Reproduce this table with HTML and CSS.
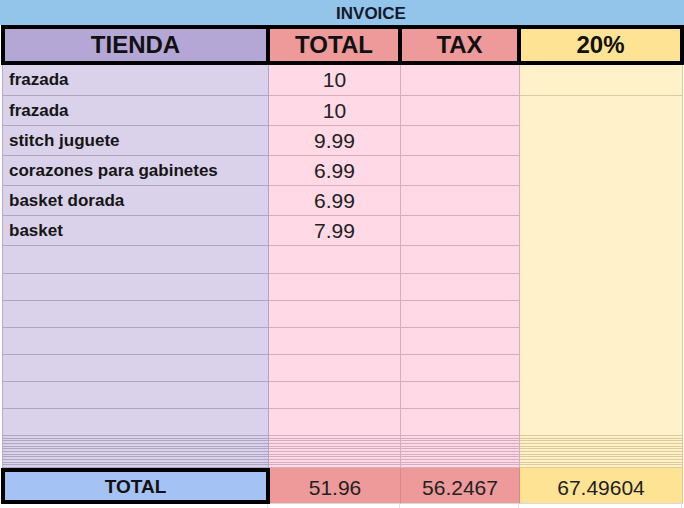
FILE: index.html
```html
<!DOCTYPE html>
<html lang="es">
<head>
<meta charset="utf-8">
<title>Invoice</title>
<link rel="stylesheet" href="styles.css">
</head>
<body>
<div class="sheet">
  <div class="banner">INVOICE</div>
  <div class="head">
    <div class="h h-store">TIENDA</div>
    <div class="h h-red">TOTAL</div>
    <div class="h h-red">TAX</div>
    <div class="h h-yellow">20%</div>
  </div>
  <div class="grid">
    <div class="pct pct-merged"></div>

    <div class="c store">frazada</div><div class="c amt">10</div><div class="c tax"></div><div class="c pct"></div>
    <div class="c store">frazada</div><div class="c amt">10</div><div class="c tax"></div>
    <div class="c store">stitch juguete</div><div class="c amt">9.99</div><div class="c tax"></div>
    <div class="c store">corazones para gabinetes</div><div class="c amt">6.99</div><div class="c tax"></div>
    <div class="c store">basket dorada</div><div class="c amt">6.99</div><div class="c tax"></div>
    <div class="c store">basket</div><div class="c amt">7.99</div><div class="c tax"></div>
    <div class="c store"></div><div class="c amt"></div><div class="c tax"></div>
    <div class="c store"></div><div class="c amt"></div><div class="c tax"></div>
    <div class="c store"></div><div class="c amt"></div><div class="c tax"></div>
    <div class="c store"></div><div class="c amt"></div><div class="c tax"></div>
    <div class="c store"></div><div class="c amt"></div><div class="c tax"></div>
    <div class="c store"></div><div class="c amt"></div><div class="c tax"></div>
    <div class="c store"></div><div class="c amt"></div><div class="c tax"></div>

    <div class="c dense dense-store"></div><div class="c dense dense-red"></div><div class="c dense dense-red"></div><div class="c dense dense-yellow"></div>
  </div>
  <div class="totals">
    <div class="t-label">TOTAL</div>
    <div class="t-num t-red">51.96</div>
    <div class="t-num t-red">56.2467</div>
    <div class="t-num t-yellow">67.49604</div>
  </div>
  <div class="tail">
    <div class="tail-cell"></div><div class="tail-cell"></div><div class="tail-cell"></div><div class="tail-cell"></div>
  </div>
</div>
</body>
</html>
```

FILE: styles.css
```css
* {
  box-sizing: border-box;
}

html,
body {
  margin: 0;
  padding: 0;
  background: #ffffff;
}

body {
  font-family: "Liberation Sans", Arial, sans-serif;
  color: #1b1b1b;
}

.sheet {
  width: 684px;
  height: 508px;
  overflow: hidden;
}

.banner {
  height: 25px;
  background: #93c4ea;
  font-weight: bold;
  font-size: 17px;
  display: flex;
  align-items: center;
  justify-content: center;
  padding-left: 58px;
  padding-top: 2px;
  color: #15192a;
}

.head {
  margin-left: 1px;
  width: 683px;
  display: grid;
  grid-template-columns: 261px 128px 115px 159px;
  gap: 4px;
  padding: 4px;
  background: #000000;
}

.h {
  height: 32px;
  display: flex;
  align-items: center;
  justify-content: center;
  font-weight: bold;
  font-size: 24px;
  color: #111111;
}

.h-store {
  background: #b4a7d6;
}

.h-red {
  background: #ef9a9a;
}

.h-yellow {
  background: #ffe394;
}

.grid {
  margin-left: 2px;
  width: 681px;
  border-left: 1px solid #b5adc3;
  display: grid;
  grid-template-columns: 266px 132px 119px 163px;
  grid-template-rows: 31px repeat(5, 30px) 28px repeat(6, 27px) 32px;
}

.c {
  border-right: 1px solid;
  border-bottom: 1px solid;
  display: flex;
  align-items: center;
}

.store {
  background: #dad2ea;
  border-color: #aea5c0;
  font-weight: bold;
  font-size: 17px;
  padding-left: 6px;
  color: #161616;
}

.amt {
  background: #ffd9e6;
  border-color: #d4adbe;
  justify-content: center;
  font-size: 21px;
  color: #222222;
}

.tax {
  background: #ffd9e6;
  border-color: #d4adbe;
}

.pct {
  background: #fff1ca;
  border-color: #e2ca98;
}

.pct-merged {
  grid-column: 4;
  grid-row: 2 / span 12;
  border-right: 1px solid #e2ca98;
  border-bottom: 1px solid #e2ca98;
}

.dense {
  border-bottom: none;
}

.dense-store {
  border-color: #aea5c0;
  background: repeating-linear-gradient(to bottom, #dad2ea 0, #dad2ea 1.67px, #aea5c0 1.67px, #aea5c0 2.67px);
}

.dense-red {
  border-color: #d4adbe;
  background: repeating-linear-gradient(to bottom, #ffd9e6 0, #ffd9e6 1.67px, #d4adbe 1.67px, #d4adbe 2.67px);
}

.dense-yellow {
  border-color: #e2ca98;
  background: repeating-linear-gradient(to bottom, #fff1ca 0, #fff1ca 1.67px, #e2ca98 1.67px, #e2ca98 2.67px);
}

.totals {
  margin-left: 1px;
  width: 682px;
  height: 36px;
  display: grid;
  grid-template-columns: 269px 131px 119px 163px;
}

.t-label {
  border: 4px solid #000000;
  background: #a4c2f4;
  font-weight: bold;
  font-size: 19px;
  display: flex;
  align-items: center;
  justify-content: center;
  padding-top: 2px;
  color: #111111;
}

.t-num {
  display: flex;
  align-items: center;
  justify-content: center;
  font-size: 21px;
  padding-top: 4px;
  color: #222222;
  border-right: 1px solid rgba(0, 0, 0, 0.1);
  border-bottom: 1px solid #d9d9d9;
}

.t-red {
  background: #ef9a9a;
}

.t-yellow {
  background: #ffe394;
}

.tail {
  margin-left: 2px;
  width: 681px;
  height: 10px;
  display: grid;
  grid-template-columns: 266px 132px 119px 163px;
}

.tail-cell {
  border-right: 1px solid #e2e2e2;
}
```
